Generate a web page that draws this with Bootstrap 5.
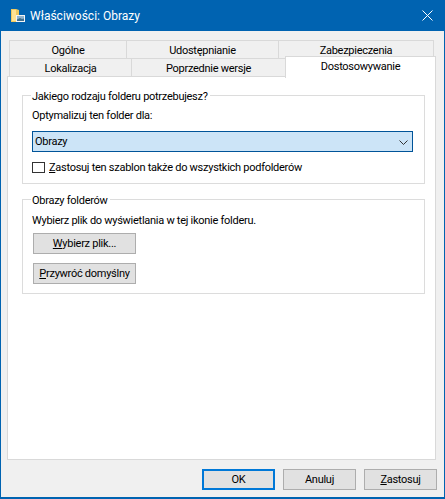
<!doctype html>
<html lang="pl">
<head>
<meta charset="utf-8">
<title>Właściwości: Obrazy</title>
<link rel="stylesheet" href="https://cdn.jsdelivr.net/npm/bootstrap@5.3.0/dist/css/bootstrap.min.css">
<style>
html,body{margin:0;height:499px;background:#f0f0f0}
body{font-family:Roboto,"Liberation Sans",sans-serif;font-size:11px;letter-spacing:-.27px;line-height:16px;color:#000}
.win{width:445px;height:499px;border:1px solid #0063b1;border-width:0 1px 2px 1px;background:#f0f0f0}
.tbar{height:31px;background:#0063b1;color:#fff;font-size:12px;letter-spacing:0;padding-left:10px;padding-right:11px;gap:5px}
.tabs-area{padding:9px 8px 0 6px}
.tabrow{height:18px;margin-left:2px;margin-right:2px}
.tb{border:1px solid #d9d9d9;border-bottom:0;background:#f0f0f0;text-align:center;margin-right:-1px;line-height:19px;white-space:nowrap}
.w-og{width:118px}.w-ud{width:153px}.w-za{width:156px}.w-lo{width:123px}.w-po{width:155px}.w-do{width:151px}
.tb-a{background:#fff;margin-top:-2px;height:22px;position:relative;z-index:2;margin-right:-2px;line-height:19px}
.panel-main{height:384px;background:#fff;border:1px solid #d9d9d9;padding:18px 10px 0 14px}
.grp{border:1px solid #dcdcdc;position:relative;padding-left:9px;padding-top:12px}
.grp-t{position:absolute;top:-7px;left:8px;background:#fff;padding:0 2px 0 1px}
.g1{height:89px;margin-bottom:15px}
.g2{height:95px;padding-top:13px}
.dd{height:21px;width:381px;background:#cce4f7;border:1px solid #005499;margin-top:7px;padding:1px 4px 0 2px}
.cbx{width:13px;height:11px;border:1px solid #333;background:#fff;flex:none;margin-bottom:1px}
.chk{margin-top:8px;gap:4px}
.wb{display:block;padding:0;background:#e1e1e1;border:1px solid #adadad;border-radius:0;font-size:11px;letter-spacing:-.27px;line-height:20px;height:21px;width:103px;color:#000;text-align:center;white-space:nowrap}
.foot{padding:9px 7px 0 0;gap:8px}
.foot .wb{width:73px}
.foot .wb-p{border:2px solid #0078d7;line-height:18px}
.sm1{margin-top:4px;margin-left:1px}
.sm2{margin-top:9px;margin-left:1px}
</style>
</head>
<body>
<div class="win d-flex flex-column">
  <div class="tbar d-flex align-items-center">
    <svg width="14" height="13" viewBox="0 0 14 13" aria-hidden="true">
      <path d="M0 0h5l3 1v12H0z" fill="#f0c95f"/><path d="M1 1h4v11H1z" fill="#ffe394"/>
      <path d="M5 6h9v7H5z" fill="#f4f4f4"/><path d="M6 7h7v5H6z" fill="#8fb4cf"/><path d="M6 10.500l3-1.500 2 1 2-.5V12H6z" fill="#3f6f8f"/>
    </svg>
    <span class="flex-grow-1">Właściwości: Obrazy</span>
    <svg width="11" height="11" viewBox="0 0 11 11" aria-hidden="true"><path d="M.5.5l10 10M10.500.5l-10 10" stroke="#fff" stroke-width="1" fill="none"/></svg>
  </div>
  <div class="tabs-area">
    <div class="tabrow d-flex">
      <div class="tb w-og">Ogólne</div>
      <div class="tb w-ud">Udostępnianie</div>
      <div class="tb w-za">Zabezpieczenia</div>
    </div>
    <div class="tabrow d-flex">
      <div class="tb w-lo">Lokalizacja</div>
      <div class="tb w-po">Poprzednie wersje</div>
      <div class="tb tb-a w-do">Dostosowywanie</div>
    </div>
    <div class="panel-main">
      <div class="grp g1">
        <span class="grp-t">Jakiego rodzaju folderu potrzebujesz?</span>
        <div>Optymalizuj ten folder dla:</div>
        <div class="dd d-flex align-items-center justify-content-between">
          <span>Obrazy</span>
          <svg width="9" height="5" viewBox="0 0 9 5" aria-hidden="true"><path d="M.5.500l4 4 4-4" stroke="#333" fill="none"/></svg>
        </div>
        <div class="chk d-flex align-items-center">
          <span class="cbx"></span>
          <span><u>Z</u>astosuj ten szablon także do wszystkich podfolderów</span>
        </div>
      </div>
      <div class="grp g2">
        <span class="grp-t">Obrazy folderów</span>
        <div>Wybierz plik do wyświetlania w tej ikonie folderu.</div>
        <button type="button" class="btn wb sm1"><u>W</u>ybierz plik...</button>
        <button type="button" class="btn wb sm2"><u>P</u>rzywróć domyślny</button>
      </div>
    </div>
  </div>
  <div class="foot d-flex justify-content-end">
    <button type="button" class="btn wb wb-p">OK</button>
    <button type="button" class="btn wb">Anuluj</button>
    <button type="button" class="btn wb"><u>Z</u>astosuj</button>
  </div>
</div>
</body>
</html>
